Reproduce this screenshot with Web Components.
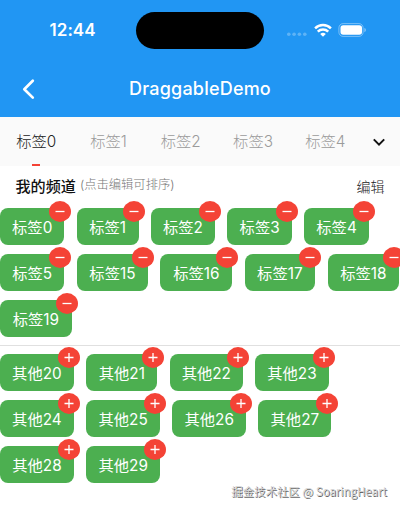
<!DOCTYPE html>
<html lang="zh-CN">
<head>
<meta charset="utf-8">
<meta name="viewport" content="width=device-width, initial-scale=1">
<title>DraggableDemo</title>
<style>
    html, body {
        margin: 0;
        height: 100%;
        overflow: hidden;
        background: #fff;
        font-family: Inter, "Noto Sans CJK SC", sans-serif;
    }
</style>
</head>
<body>
<demo-app></demo-app>
<script>
class StatusBar extends HTMLElement {
    constructor() {
        super();
        this.attachShadow({ mode: 'open' });
        this.shadowRoot.innerHTML = `
            <style>
                :host {
                    display: grid;
                    grid-template-columns: 136px 128px 136px;
                    align-items: center;
                    height: 60px;
                    color: #fff;
                }
                .time {
                    padding-left: 49.5px;
                    font-size: 17px;
                    line-height: 20px;
                    font-weight: 600;
                    letter-spacing: 0.05px;
                }
                .island {
                    height: 37px;
                    border-radius: 19px;
                    background: #000;
                }
                .icons {
                    display: flex;
                    align-items: center;
                    padding-left: 22px;
                }
                svg { display: block; }
                .wifi { margin: -1px 0 0 6px; }
                .battery { margin-left: 6px; }
            </style>
            <div class="time">12:44</div>
            <div class="island"></div>
            <div class="icons">
                <svg width="22" height="14" viewBox="0 0 22 14" fill="#fff" fill-opacity=".28">
                    <circle cx="2.8" cy="11.2" r="1.8"/><circle cx="8.1" cy="11.2" r="1.8"/>
                    <circle cx="13.4" cy="11.2" r="1.8"/><circle cx="18.8" cy="11.2" r="1.8"/>
                </svg>
                <svg class="wifi" width="18" height="14" viewBox="0 0 18 14" fill="none" stroke="#fff" stroke-width="2.5">
                    <path d="M1.1 5.3a11.4 11.4 0 0 1 15.8 0"/>
                    <path d="M3.800 8.600a7.400 7.400 0 0 1 10.400 0"/>
                    <path d="M6.2 11a4 4 0 0 1 5.6 0L9 13.8z" fill="#fff" stroke="none"/>
                </svg>
                <svg class="battery" width="29" height="14" viewBox="0 0 29 14">
                    <rect x=".9" y=".6" width="24.2" height="12.8" rx="4.2" fill="none" stroke="#fff" stroke-opacity=".4"/>
                    <rect x="2.5" y="2.2" width="21.5" height="9.6" rx="2.7" fill="#fff"/>
                    <path d="M26.4 5v4.2c1-.4 1.5-1.2 1.5-2.1s-.5-1.7-1.5-2.1z" fill="#fff" fill-opacity=".45"/>
                </svg>
            </div>
        `;
    }
}
customElements.define('status-bar', StatusBar);

class NavBar extends HTMLElement {
    constructor() {
        super();
        this.attachShadow({ mode: 'open' });
        this.shadowRoot.innerHTML = `
            <style>
                :host {
                    display: grid;
                    grid-template-columns: 56px 1fr 56px;
                    align-items: center;
                    height: 57px;
                    color: #fff;
                }
                svg { display: block; margin: 0 0 0 20px; }
                .title {
                    padding-top: 1px;
                    text-align: center;
                    font-size: 18px;
                    line-height: 24px;
                    font-weight: 500;
                    letter-spacing: 0.2px;
                }
            </style>
            <svg width="18" height="22" viewBox="0 0 18 22" fill="none" stroke="#fff" stroke-width="2.7" stroke-linecap="round" stroke-linejoin="round">
                <path d="M12.8 2.800 4.300 11.200l8.500 8.400"/>
            </svg>
            <div class="title"><slot></slot></div>
        `;
    }
}
customElements.define('nav-bar', NavBar);

class TabStrip extends HTMLElement {
    constructor() {
        super();
        this.attachShadow({ mode: 'open' });
        this.shadowRoot.innerHTML = `
            <style>
                :host {
                    display: grid;
                    grid-template-columns: repeat(5, 72.3px) 1fr;
                    height: 49px;
                    background: #fafafa;
                    color: #9b9b9b;
                    font-size: 15.3px;
                    font-weight: 300;
                }
                .tab {
                    display: flex;
                    flex-direction: column;
                    align-items: center;
                    justify-content: space-between;
                    line-height: 20px;
                    padding-top: 15px;
                }
                .active { color: #222; }
                .active::after {
                    content: "";
                    width: 8px;
                    height: 2px;
                    background: #f44336;
                }
                svg { align-self: center; margin-left: 11px; }
            </style>
            <div class="tab active">标签0</div>
            <div class="tab">标签1</div>
            <div class="tab">标签2</div>
            <div class="tab">标签3</div>
            <div class="tab">标签4</div>
            <svg width="14" height="12" viewBox="0 0 14 12" fill="none" stroke="#111" stroke-width="2">
                <path d="M1.8 3.4 7 8.6l5.2-5.2"/>
            </svg>
        `;
    }
}
customElements.define('tab-strip', TabStrip);

class ChannelHeader extends HTMLElement {
    constructor() {
        super();
        this.attachShadow({ mode: 'open' });
        this.shadowRoot.innerHTML = `
            <style>
                :host {
                    display: flex;
                    align-items: center;
                    height: 41.5px;
                    padding: 0 15.5px 0 15.5px;
                    color: #111;
                    line-height: 20px;
                }
                .title { font-size: 15.1px; font-weight: 500; }
                .hint {
                    margin: -3px auto 0 4px;
                    font-size: 12.3px;
                    font-weight: 300;
                    color: #777;
                }
                .edit { font-size: 14px; font-weight: 300; color: #222; }
            </style>
            <span class="title">我的频道</span>
            <span class="hint">(点击编辑可排序)</span>
            <span class="edit">编辑</span>
        `;
    }
}
customElements.define('channel-header', ChannelHeader);

class ChannelChip extends HTMLElement {
    constructor() {
        super();
        this.attachShadow({ mode: 'open' });
        const plus = this.getAttribute('action') === 'add';
        this.shadowRoot.innerHTML = `
            <style>
                :host {
                    display: block;
                    position: relative;
                    flex: none;
                    box-sizing: border-box;
                    width: ${this.getAttribute('width')}px;
                    height: 37.5px;
                    border-radius: 8px;
                    background: #4caf50;
                    color: #fff;
                    font-size: 15.3px;
                    line-height: 39px;
                    text-align: center;
                    white-space: nowrap;
                }
                svg {
                    position: absolute;
                    top: -6.5px;
                    right: -6.3px;
                }
            </style>
            <slot></slot>
            <svg width="22" height="21" viewBox="0 0 22 21">
                <ellipse cx="11" cy="10.5" rx="11" ry="10.4" fill="#f44336"/>
                <path d="M6.5 10.5h9${plus ? 'M11 6v9' : ''}" stroke="#fff" stroke-width="1.3" fill="none"/>
            </svg>
        `;
    }
}
customElements.define('channel-chip', ChannelChip);

class ChipWrap extends HTMLElement {
    constructor() {
        super();
        this.attachShadow({ mode: 'open' });
        this.shadowRoot.innerHTML = `
            <style>
                :host {
                    display: flex;
                    flex-wrap: wrap;
                    gap: 8.5px 12.4px;
                }
            </style>
            <slot></slot>
        `;
    }
}
customElements.define('chip-wrap', ChipWrap);

class WaterMark extends HTMLElement {
    constructor() {
        super();
        this.attachShadow({ mode: 'open' });
        this.shadowRoot.innerHTML = `
            <style>
                :host {
                    position: absolute;
                    right: 13px;
                    bottom: 11px;
                    font: 400 11.4px/18px "Noto Sans CJK SC", sans-serif;
                    letter-spacing: 0.05px;
                    white-space: nowrap;
                    color: #d4d4d4;
                    text-shadow: 0.8px 0.8px 0.5px #666;
                }
            </style>
            <slot></slot>
        `;
    }
}
customElements.define('water-mark', WaterMark);

class DemoApp extends HTMLElement {
    constructor() {
        super();
        this.attachShadow({ mode: 'open' });
        const mine = [[0, 64.4], [1, 61.8], [2, 64], [3, 64.5], [4, 64.6], [5, 64.4], [15, 71.3], [16, 71.7], [17, 70.6], [18, 71.6], [19, 71.8]];
        const others = [[20, 73.8], [21, 71.2], [22, 73], [23, 73.5], [24, 73.8], [25, 73.8], [26, 73.6], [27, 73], [28, 73.8], [29, 74]];
        const chips = (list, name, action) => list.map(([id, width]) =>
            `<channel-chip width="${width}" action="${action}">${name}${id}</channel-chip>`).join('');
        this.shadowRoot.innerHTML = `
            <style>
                :host {
                    display: block;
                    position: relative;
                    height: 511px;
                    overflow: hidden;
                }
                header { background: #2196f3; }
                .divider {
                    height: 1px;
                    margin: 8px 0 7.5px;
                    background: #e0e0e0;
                }
            </style>
            <header>
                <status-bar></status-bar>
                <nav-bar>DraggableDemo</nav-bar>
            </header>
            <tab-strip></tab-strip>
            <channel-header></channel-header>
            <chip-wrap>${chips(mine, '标签', 'remove')}</chip-wrap>
            <div class="divider"></div>
            <chip-wrap>${chips(others, '其他', 'add')}</chip-wrap>
            <water-mark>掘金技术社区 @ SoaringHeart</water-mark>
        `;
    }
}
customElements.define('demo-app', DemoApp);
</script>
</body>
</html>
